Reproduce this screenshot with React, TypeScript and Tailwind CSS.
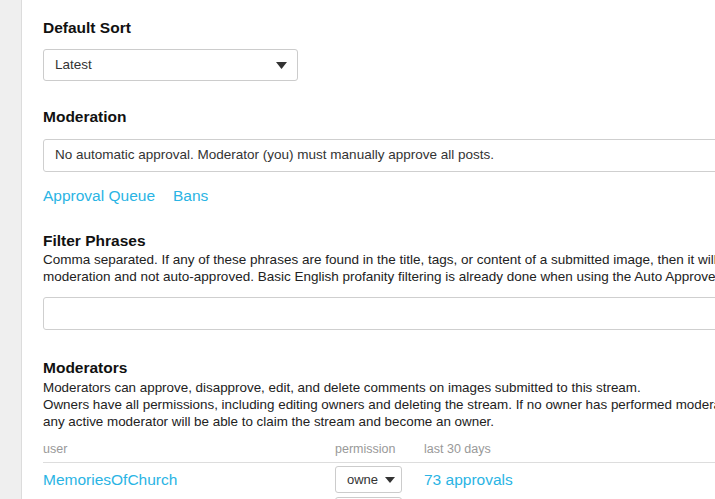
import React from 'react'

const font = { fontFamily: '"Liberation Sans", Arial, sans-serif' }

function Caret({ w = 11, h = 7 }: { w?: number; h?: number }) {
    return (
        <svg width={w} height={h} viewBox={`0 0 ${w} ${h}`}>
            <path d={`M0 0 L${w} 0 L${w / 2} ${h} Z`} fill="#333" />
        </svg>
    )
}

function Heading({ children }: { children: React.ReactNode }) {
    return <h2 className="text-[15.5px] font-bold leading-[18px] text-[#111]">{children}</h2>
}

export default function App() {
    return (
        <div className="flex w-full h-[499px] overflow-hidden bg-white text-[#222]" style={font}>
            {/* left rail */}
            <div className="w-[22px] shrink-0 bg-[#efefef] border-r border-[#dcdcdc]" />

            <main className="shrink-0 w-[900px] pl-[21px] pt-[19px]">
                {/* Default Sort */}
                <Heading>Default Sort</Heading>
                <div className="mt-[12px] w-[255px] h-[32px] flex items-center justify-between pl-[11px] pr-[10px] border border-[#cccccc] rounded-[3px] text-[13.5px] text-[#333]">
                    <span>Latest</span>
                    <Caret />
                </div>

                {/* Moderation */}
                <div className="mt-[27px]">
                    <Heading>Moderation</Heading>
                </div>
                <div className="mt-[13px] h-[33px] flex items-center pl-[11px] border border-[#cfcfcf] rounded-[3px] text-[13.5px] text-[#333]">
                    No automatic approval. Moderator (you) must manually approve all posts.
                </div>
                <div className="mt-[14px] flex gap-[18px] text-[15.5px] leading-[20px] text-[#2ab4e4]">
                    <a>Approval Queue</a>
                    <a>Bans</a>
                </div>

                {/* Filter Phrases */}
                <div className="mt-[26px]">
                    <Heading>Filter Phrases</Heading>
                </div>
                <p className="mt-[1px] text-[13.5px] leading-[17px] whitespace-nowrap">
                    Comma separated. If any of these phrases are found in the title, tags, or content of a submitted image, then it will be held for
                    <br />
                    moderation and not auto-approved. Basic English profanity filtering is already done when using the Auto Approve setting.
                </p>
                <div className="mt-[12px] h-[33px] border border-[#cfcfcf] rounded-[3px]" />

                {/* Moderators */}
                <div className="mt-[29px]">
                    <Heading>Moderators</Heading>
                </div>
                <p className="mt-[2px] text-[13.4px] leading-[17px] whitespace-nowrap">
                    Moderators can approve, disapprove, edit, and delete comments on images submitted to this stream.
                    <br />
                    Owners have all permissions, including editing owners and deleting the stream. If no owner has performed moderation in 30 days,
                    <br />
                    any active moderator will be able to claim the stream and become an owner.
                </p>

                <div className="mt-[11px] text-[12.5px] leading-[16px] text-[#999] flex pb-[5px] border-b border-[#dddddd]">
                    <span className="w-[292px]">user</span>
                    <span className="w-[89px]">permission</span>
                    <span>last 30 days</span>
                </div>
                <div className="flex items-center pt-[3px]">
                    <a className="w-[292px] text-[15.5px] text-[#2ab4e4]">MemoriesOfChurch</a>
                    <div className="w-[67px] h-[27px] mr-[22px] flex items-center justify-between pl-[11px] pr-[6px] border border-[#cccccc] rounded-[3px] text-[13px] text-[#333]">
                        <span>owne</span>
                        <Caret w={10} h={6} />
                    </div>
                    <a className="text-[15.5px] text-[#2ab4e4]">73 approvals</a>
                </div>
                <div className="mt-[4px] ml-[292px] w-[67px] h-[27px] border border-[#cccccc] rounded-[3px]" />
            </main>
        </div>
    )
}
